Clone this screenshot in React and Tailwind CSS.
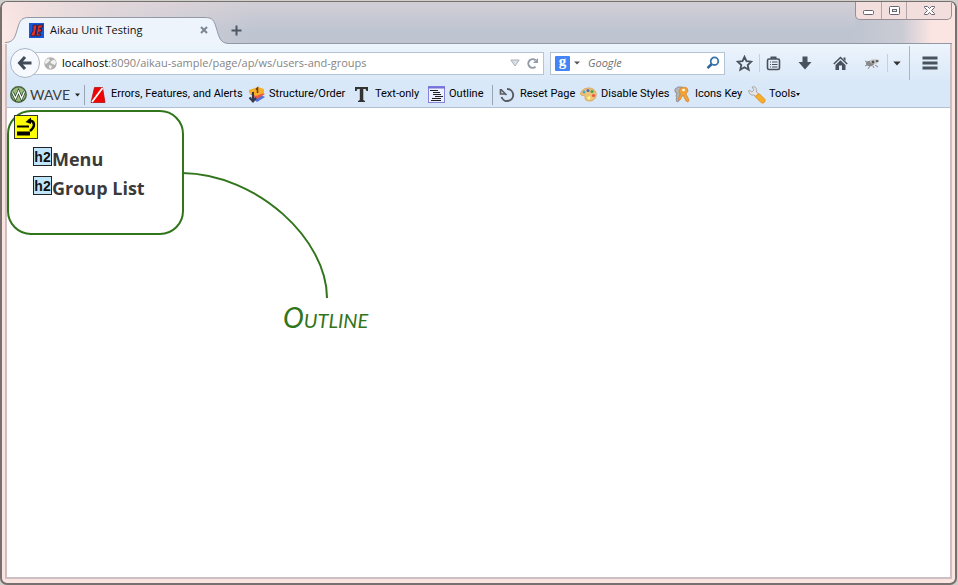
import React from "react";

const uiFont = "font-['Open_Sans','Noto_Sans',sans-serif]";

function WindowControls() {
  return (
    <div className="flex h-[18px] w-[97px] shrink-0 overflow-hidden rounded-b-[5px] border border-t-0 border-[#998f92] bg-[#f1dedd]">
      <button aria-label="Minimize" className="flex w-[26px] items-center justify-center border-r border-[#b1a5a7]">
        <svg width="13" height="13" viewBox="0 0 13 13"><rect x="1.500" y="6.500" width="10" height="4" rx="1" fill="#fff" stroke="#666570" /></svg>
      </button>
      <button aria-label="Maximize" className="flex w-[25px] items-center justify-center border-r border-[#b1a5a7]">
        <svg width="13" height="13" viewBox="0 0 13 13"><rect x="1.500" y="2.500" width="10" height="8" rx="1" fill="#fff" stroke="#666570" /><rect x="4.500" y="5.500" width="4" height="2" fill="#eee" stroke="#666570" /></svg>
      </button>
      <button aria-label="Close" className="flex flex-1 items-center justify-center">
        <svg width="13" height="13" viewBox="0 0 13 13"><path d="M1.500 2.500H4.500L6.500 4.500L8.500 2.500H11.500V3.500L8.500 6.500L11.500 9.500V10.500H8.500L6.500 8.500L4.500 10.500H1.500V9.500L4.500 6.500L1.500 3.500Z" fill="#fff" stroke="#666570" /></svg>
      </button>
    </div>
  );
}

function Tab() {
  return (
    <div className="relative h-[27px] w-[223px] shrink-0">
      <svg className="absolute inset-0" width="224" height="27" viewBox="0 0 224 27" aria-hidden="true">
        <path d="M0 27V25.500C9 25.500 10 20 13 10C15 3 17 .5 24 .5H200C208 .5 209 4 211 10C214 20 215 26.500 224 26.500V27Z" fill="#edf4fc" />
        <path d="M0 25.500C9 25.500 10 20 13 10C15 3 17 .5 24 .5H200C208 .5 209 4 211 10C214 20 215 26.500 224 26.500" fill="none" stroke="#9299a5" />
      </svg>
      <div className="relative flex h-full items-center pb-px pl-6 pr-2">
        <svg width="15" height="15" viewBox="0 0 15 15" className="shrink-0"><rect width="15" height="15" fill="#1858d8" /><path d="M4 2H8L6 13H2V11L4 8ZM9 2H14L13 5H11L10.500 6H13L12 9H10L9.500 11H12L11 13H7Z" fill="#e23020" stroke="#181848" strokeWidth=".8" /></svg>
        <span className="ml-[6px] flex-1 whitespace-nowrap text-[11px] text-[#111]">Aikau Unit Testing</span>
        <button aria-label="Close tab" className="mr-[10px] flex size-3 items-center justify-center">
          <svg width="8" height="8" viewBox="0 0 8 8"><path d="M1 1L7 7M7 1L1 7" stroke="#7c8692" strokeWidth="2" /></svg>
        </button>
      </div>
    </div>
  );
}

function TitleBar() {
  return (
    <header className="flex h-[42px] items-start bg-[linear-gradient(90deg,#fde9e6_0px,#f3e2e1_25px,#d8d3d9_110px,#bec5d1_250px,#bec5d1_850px,#cbcbd4_900px,#fbe5e3_930px)]">
      <div className="flex h-full min-w-0 flex-1 items-end bg-[linear-gradient(180deg,#efdcdc66,#ffffff00_70%)]">
        <div className="w-[3px]" />
        <Tab />
        <div className="flex h-[27px] flex-1 items-center border-b border-[#9299a5]">
          <button aria-label="New tab" className="flex size-4 items-center justify-center">
            <svg width="11" height="11" viewBox="0 0 11 11"><path d="M5.500 .5V10.500M.5 5.500H10.500" stroke="#4f5864" strokeWidth="2" /></svg>
          </button>
        </div>
      </div>
      <div className="flex h-[42px] items-start border-b border-[#9299a5]"><WindowControls /></div>
      <div className="w-[3px]" />
    </header>
  );
}

function NavBar() {
  return (
    <nav className="flex h-[38px] items-center pl-[3px]">
      <button aria-label="Back" className="z-10 -mr-[14px] flex size-[30px] shrink-0 items-center justify-center rounded-full border border-[#a8b4c4] bg-[#f6fafe]">
        <svg width="16" height="16" viewBox="0 0 16 16"><path d="M8 2L2.500 8L8 14M3 8H14.500" fill="none" stroke="#414b57" strokeWidth="3" /></svg>
      </button>
      <div className="flex h-[23px] min-w-0 flex-1 items-center border border-[#b4c3d5] bg-white pl-[17px] pr-1">
        <svg width="13" height="13" viewBox="0 0 13 13" className="shrink-0"><circle cx="6.500" cy="6.500" r="6.200" fill="#b0b0b0" /><path d="M2 2.500L5 1.500L6 3L4.500 5L2 7L.8 6ZM7 4L10.500 2.500L12.200 5L11 8L8 7L6.500 5.500ZM5 8L8 9L7 12L5 11Z" fill="#f0f0f0" /></svg>
        <button aria-label="Page address" className="ml-[5px] flex-1 truncate text-left text-[11px] text-[#858585]"><span className="text-black">localhost</span>:8090/aikau-sample/page/ap/ws/users-and-groups</button>
        <button aria-label="History" className="mr-[6px]"><svg width="10" height="8" viewBox="0 0 10 8"><path d="M.8 1H9.200L5 7Z" fill="#dce0e5" stroke="#a9b1ba" /></svg></button>
        <button aria-label="Reload"><svg width="13" height="13" viewBox="0 0 13 13"><path d="M9.500 9.700A4.300 4.300 0 1 1 9.500 3.300" fill="none" stroke="#929ba7" strokeWidth="2" /><path d="M12 1V6H7Z" fill="#929ba7" /></svg></button>
      </div>
      <div className="ml-[6px] flex h-[23px] w-[175px] shrink-0 items-center border border-[#b4c3d5] bg-white px-1">
        <button aria-label="Search engine" className="flex items-center gap-1">
          <span className="flex size-[15px] items-center justify-center rounded-[1px] bg-[#4385f5] pb-1 font-['Liberation_Serif',serif] text-[15px] font-bold leading-3 text-white">g</span>
          <svg width="6" height="4" viewBox="0 0 6 4"><path d="M0 .5H6L3 3.500Z" fill="#555" /></svg>
        </button>
        <input aria-label="Search with Google" placeholder="Google" className="ml-2 w-0 min-w-0 flex-1 bg-transparent text-[11px] italic outline-none placeholder:text-[#707070]" />
        <button aria-label="Search"><svg width="14" height="14" viewBox="0 0 14 14"><circle cx="8.500" cy="5.200" r="3.800" fill="#fff" stroke="#3a74b0" strokeWidth="1.800" /><path d="M5.700 8L1.500 12.200" stroke="#2f659f" strokeWidth="2.500" /></svg></button>
      </div>
      <div className="flex h-full shrink-0 items-center text-[#48515d]">
        <button aria-label="Bookmark page" className="flex w-[38px] justify-center"><svg width="17" height="17" viewBox="0 0 17 17"><path d="M8.500 1.800L10.500 6.200L15.300 6.700L11.700 10L12.700 14.800L8.500 12.300L4.300 14.800L5.300 10L1.700 6.700L6.500 6.200Z" fill="none" stroke="currentColor" strokeWidth="1.800" /></svg></button>
        <div className="-ml-1 h-[18px] w-px bg-[#c3d0df]" />
        <button aria-label="Bookmarks menu" className="flex w-[27px] justify-center"><svg width="15" height="15" viewBox="0 0 15 15"><rect x="1.500" y="3" width="12" height="10.500" rx="1.500" fill="none" stroke="currentColor" strokeWidth="1.600" /><path d="M5.500 3V1.500H9.500V3" fill="none" stroke="currentColor" strokeWidth="2" /><path d="M4 6H5M6 6H11.500M4 8.500H5M6 8.500H11.500M4 11H5M6 11H11.500" stroke="currentColor" strokeWidth="1" /></svg></button>
        <button aria-label="Downloads" className="flex w-[36px] justify-center"><svg width="14" height="14" viewBox="0 0 14 14"><path d="M4.500 .5H9.500V6H13.500L7 13.500L.5 6H4.500Z" fill="currentColor" /></svg></button>
        <button aria-label="Home" className="flex w-[34px] justify-center"><svg width="15" height="15" viewBox="0 0 15 15"><path d="M.8 8L7.500 1.500L14.200 8" fill="none" stroke="currentColor" strokeWidth="1.600" /><path d="M10.500 1.500H12.500V5L10.500 3Z" fill="currentColor" /><path d="M2.500 9L7.500 4.300L12.500 9V14H9V9.500H6V14H2.500Z" fill="currentColor" /></svg></button>
        <button aria-label="Firebug" className="flex w-[30px] justify-center"><svg width="15" height="13" viewBox="0 0 15 13"><path d="M2 5L0 4M2 8L0 9M5 9L3 12M8 9L9 11M10 8L13 10M11 4L14 4" stroke="#888" /><ellipse cx="5" cy="6.500" rx="4" ry="2.800" fill="#888" /><ellipse cx="9" cy="4.500" rx="4" ry="2.300" fill="#c6c6c6" /><circle cx="8" cy="5" r="1.500" fill="#555" /><circle cx="12" cy="4" r="1.300" fill="#666" /></svg></button>
        <div className="h-[18px] w-px bg-[#c3d0df]" />
        <button aria-label="Firebug options" className="flex w-[18px] justify-center"><svg width="8" height="5" viewBox="0 0 8 5"><path d="M.3 .5H7.700L4 4.500Z" fill="#333" /></svg></button>
        <div className="ml-[3px] h-[34px] w-px bg-[#a5b6cc]" />
        <button aria-label="Open menu" className="flex w-[40px] justify-center"><svg width="16" height="14" viewBox="0 0 16 14"><path d="M.5 2H15.500M.5 7H15.500M.5 12H15.500" stroke="currentColor" strokeWidth="3" /></svg></button>
      </div>
    </nav>
  );
}

const tools = [
  { label: "Errors, Features, and Alerts", width: "w-[158px]", icon: <svg width="16" height="18" viewBox="0 0 16 18"><path d="M4.500 1.500H12.500L15 16.500H1Z" fill="#f00505" stroke="#b31212" strokeWidth=".8" /><path d="M12.500 2L2 16" stroke="#fff" strokeWidth="1.800" /></svg> },
  { label: "Structure/Order", width: "w-[106px]", icon: <svg width="18" height="18" viewBox="0 0 18 18"><path d="M3 11L11 8L17 11L9 16Z" fill="#5570dc" /><path d="M2 8L10 5L17 8L9 13Z" fill="#e85a44" /><path d="M1 4L10 1L16 3V7L8 10L1 7Z" fill="#f8ae28" /><path d="M8 3.500L9.500 2V7" fill="none" stroke="#60420b" strokeWidth="1.500" /><path d="M5 6V15M1.500 11.500L5 15.500L8 12" fill="none" stroke="#333b4a" strokeWidth="2" /></svg> },
  { label: "Text-only", width: "w-[74px]", icon: <svg width="15" height="17" viewBox="0 0 15 17"><path d="M1 1H14V5H12.500L11.500 3H9.300V14L11 15V16H4V15L5.800 14V3H3.500L2.500 5H1Z" fill="#333" /></svg> },
  { label: "Outline", width: "w-[64px]", icon: <svg width="17" height="17" viewBox="0 0 17 17"><rect x=".5" y=".5" width="16" height="16" fill="#eef1ff" stroke="#8583df" /><path d="M0 1.500H17" stroke="#7471d8" strokeWidth="2" /><path d="M2 4.500H10M5 6.500H12M5 8.500H13M7 10.500H15M4 12.500H13M3 14.500H13" stroke="#222" /></svg> },
  { label: "Reset Page", width: "w-[81px]", divided: true, icon: <svg width="16" height="16" viewBox="0 0 16 16"><path d="M8 2A6 6 0 1 1 2.500 10" fill="none" stroke="#5a5e63" strokeWidth="2" /><path d="M1.500 2V7H6.500M2 2.500L7.500 8" fill="none" stroke="#5a5e63" strokeWidth="1.700" /></svg> },
  { label: "Disable Styles", width: "w-[94px]", icon: <svg width="17" height="16" viewBox="0 0 17 16"><path d="M.5 7C1 3 5 1 9 1C14 1 17 5 16 9C15 14 9 15 6 13C4 11.500 6 10 5 9C3.500 8 1 9 .5 7Z" fill="#eec376" stroke="#d6a85a" /><circle cx="4" cy="5" r="1.500" fill="#48a5d0" /><circle cx="8" cy="3.500" r="1.600" fill="#536bc2" /><circle cx="12" cy="4.500" r="1.600" fill="#42a552" /><circle cx="13.500" cy="8.500" r="1.600" fill="#eb5740" /><circle cx="9" cy="11" r="1.700" fill="#fff58d" /></svg> },
  { label: "Icons Key", width: "w-[74px]", icon: <svg width="16" height="17" viewBox="0 0 16 17"><path d="M1 3L4 1H8L9 4L6 7L5 15L3 16L2 13L3 12L2 10L3 7L1 6Z" fill="#b5b5b5" stroke="#858585" strokeWidth=".8" /><path d="M6 3L9 1L13 2L14 5L12 8L15 14L14 16L12 15L9 9L6 14L4 13L7 8L5 6Z" fill="#f1a338" stroke="#d7862c" strokeWidth=".8" /><circle cx="9.500" cy="4" r="1.300" fill="#fff" /></svg> },
  { label: "Tools", width: "w-[60px]", menu: true, icon: <svg width="18" height="18" viewBox="0 0 18 18"><path d="M1 4L4 6L6 4L4 1C8 0 9 3 8.500 6L12 9L9 12L6 9C3 10 0 7 1 4Z" fill="#e5e5e5" stroke="#999" strokeWidth=".8" /><path d="M7 10.500L11 7.500L17 13.500C17.500 17 14.500 17.800 13 16.500Z" fill="#f7ae29" stroke="#dd861a" strokeWidth=".8" /></svg> },
];

function WaveToolbar() {
  return (
    <div className="flex h-[26px] items-center overflow-hidden border-b border-[#aebfd6] pl-[3px]">
      <button className="flex w-[74px] shrink-0 items-center text-[#3d3d3d]">
        <svg width="17" height="17" viewBox="0 0 17 17"><circle cx="8.500" cy="8.500" r="7.700" fill="#9aba7b" stroke="#4b6542" strokeWidth="1.500" /><path d="M2.500 6.500L5.500 12.500L8.500 5.500L11.500 12.500L14.500 5.500" fill="none" stroke="#29462a" strokeWidth="2.800" /><path d="M2.500 6.500L5.500 12.500L8.500 5.500L11.500 12.500L14.500 5.500" fill="none" stroke="#fff" strokeWidth="1.300" /></svg>
        <span className="ml-[3px] font-['Lato',sans-serif] text-sm">WAVE</span>
        <svg width="5" height="4" viewBox="0 0 5 4" className="ml-[5px]"><path d="M0 .5H5L2.500 3.500Z" fill="#222" /></svg>
      </button>
      <div className="mr-[5px] h-5 w-px shrink-0 bg-[#9aa5b3]" />
      {tools.map((tool) => (
        <React.Fragment key={tool.label}>
          {tool.divided && <div className="mr-[6px] h-5 w-px shrink-0 bg-[#9aa5b3]" />}
          <button className={`flex shrink-0 items-center whitespace-nowrap font-['Roboto',sans-serif] text-[11px] text-black ${tool.width}`}>
            <span className="flex w-[21px] shrink-0">{tool.icon}</span>
            {tool.label}
            {tool.menu && <svg width="4" height="3" viewBox="0 0 4 3"><path d="M0 0H4L2 3Z" fill="#111" /></svg>}
          </button>
        </React.Fragment>
      ))}
    </div>
  );
}

function Heading({ children }) {
  return (
    <div className="flex h-[29px] items-center">
      <span className="mb-1 flex h-[19px] w-[19px] items-center justify-center border border-[#222] bg-[#bfe6fa] font-['Liberation_Sans',sans-serif] text-[14px] font-bold leading-4 text-[#111]">h2</span>
      <h2 className="whitespace-nowrap text-[18px] font-bold leading-6 text-[#3a3a3a]">{children}</h2>
    </div>
  );
}

function Page() {
  return (
    <main className="flex-1 bg-white pt-[2px]">
      <section className="relative h-[125px] w-[177px] rounded-[24px] border-2 border-[#31751b] pl-[5px] pt-[3px]">
        <svg width="24" height="24" viewBox="0 0 24 24" role="img" aria-label="Navigation">
          <rect x=".5" y=".5" width="23" height="23" fill="#ff0" stroke="#333" />
          <path d="M3 11.500H15" stroke="#000" strokeWidth="2" /><path d="M3 18.500H16" stroke="#000" strokeWidth="4" />
          <path d="M14 6C21 5 22 11 16 16" fill="none" stroke="#000" strokeWidth="2.500" /><path d="M11.500 7L17 2.500V9Z" fill="#000" />
        </svg>
        <div className="ml-[19px] mt-[5px]">
          <Heading>Menu</Heading>
          <Heading>Group List</Heading>
        </div>
        <svg className="absolute left-full top-[60px]" width="150" height="128" viewBox="0 0 150 128" aria-hidden="true">
          <path d="M0 1C76 2 145 68 145 126" fill="none" stroke="#31751b" strokeWidth="2" />
        </svg>
        <p className="absolute left-[274px] top-[189px] whitespace-nowrap font-['Lato',cursive] text-[28px] italic leading-8 text-[#31751b] [font-variant-caps:small-caps]">Outline</p>
      </section>
    </main>
  );
}

export default function App() {
  return (
    <div className={`flex min-h-screen bg-[#cfcfcc] pr-px pt-px ${uiFont}`}>
      <div className="flex min-w-0 flex-1 flex-col overflow-hidden rounded-[7px] border-2 border-t border-[#76716f] bg-[#fbe3e0]">
        <TitleBar />
        <div className="mx-[3px] mb-[4px] flex flex-1 flex-col border-x-2 border-b-2 border-[#cbbfc3]">
          <div className="bg-[linear-gradient(180deg,#edf4fc,#d9e8f8_60%)]">
            <NavBar />
            <WaveToolbar />
          </div>
          <Page />
        </div>
      </div>
    </div>
  );
}
